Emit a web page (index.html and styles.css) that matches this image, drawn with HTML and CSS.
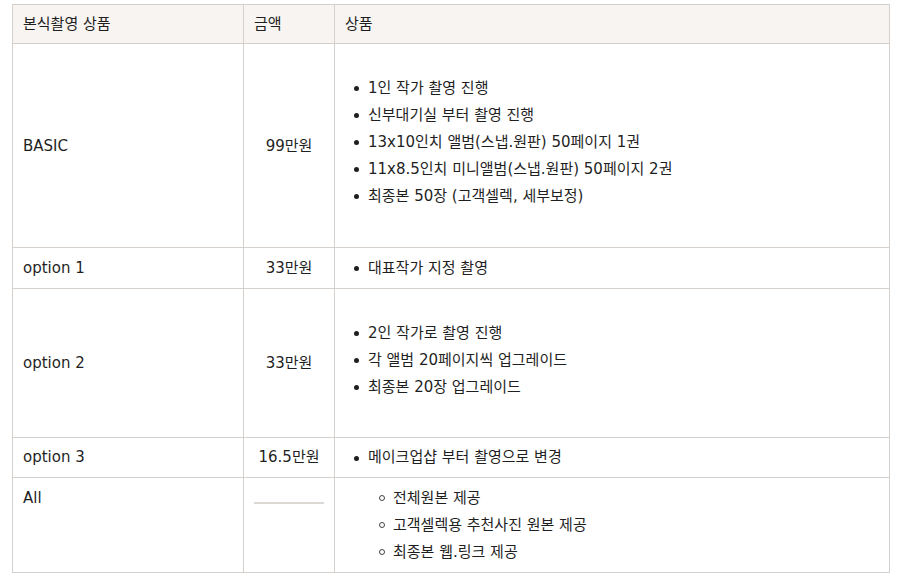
FILE: index.html
```html
<!DOCTYPE html>
<html lang="ko">
<head>
<meta charset="utf-8">
<title>본식촬영 상품</title>
<link rel="stylesheet" href="styles.css">
</head>
<body>
<div class="wrap">
<table class="price">
  <colgroup>
    <col class="c-name">
    <col class="c-amt">
    <col class="c-desc">
  </colgroup>
  <thead>
    <tr>
      <th>본식촬영 상품</th>
      <th>금액</th>
      <th>상품</th>
    </tr>
  </thead>
  <tbody>
    <tr>
      <td>BASIC</td>
      <td class="amt">99만원</td>
      <td>
        <ul class="items multi basic">
          <li>1인 작가 촬영 진행</li>
          <li>신부대기실 부터 촬영 진행</li>
          <li>13x10인치 앨범(스냅.원판) 50페이지 1권</li>
          <li>11x8.5인치 미니앨범(스냅.원판) 50페이지 2권</li>
          <li>최종본 50장 (고객셀렉, 세부보정)</li>
        </ul>
      </td>
    </tr>
    <tr>
      <td>option 1</td>
      <td class="amt">33만원</td>
      <td>
        <ul class="items">
          <li>대표작가 지정 촬영</li>
        </ul>
      </td>
    </tr>
    <tr>
      <td>option 2</td>
      <td class="amt">33만원</td>
      <td>
        <ul class="items multi">
          <li>2인 작가로 촬영 진행</li>
          <li>각 앨범 20페이지씩 업그레이드</li>
          <li>최종본 20장 업그레이드</li>
        </ul>
      </td>
    </tr>
    <tr class="short">
      <td>option 3</td>
      <td class="amt">16.5만원</td>
      <td>
        <ul class="items">
          <li>메이크업샵 부터 촬영으로 변경</li>
        </ul>
      </td>
    </tr>
    <tr class="top">
      <td>All</td>
      <td class="amt"><hr class="rule"></td>
      <td>
        <ul class="items nested">
          <li>전체원본 제공</li>
          <li>고객셀렉용 추천사진 원본 제공</li>
          <li>최종본 웹.링크 제공</li>
        </ul>
      </td>
    </tr>
  </tbody>
</table>
</div>
</body>
</html>
```

FILE: styles.css
```css
html, body {
  margin: 0;
  padding: 0;
  background: #ffffff;
}

body {
  font-family: "DejaVu Sans", "Noto Sans CJK KR", sans-serif;
  font-size: 15px;
  color: #1f1f1f;
}

.wrap {
  padding: 4px 11px 0 12px;
}

.price {
  width: 878px;
  border-collapse: collapse;
  table-layout: fixed;
}

.c-name { width: 231px; }
.c-amt { width: 91px; }
.c-desc { width: auto; }

.price th,
.price td {
  border: 1px solid #d5d0cb;
  padding: 10px 10px;
  line-height: 20px;
  text-align: left;
  vertical-align: middle;
  font-weight: 400;
}

.price th {
  background: #f7f4f1;
  line-height: 18px;
}

.price td.amt {
  text-align: center;
}

.price tr.short td,
.price tr.short li {
  line-height: 19px;
}

.price tr.top td {
  vertical-align: top;
}

.items {
  list-style: none;
  margin: 0;
  padding: 0 0 0 23px;
}

.items li {
  position: relative;
  line-height: 20px;
}

.items li + li {
  margin-top: 7px;
}

.items li::before {
  content: "";
  position: absolute;
  left: -14px;
  top: 8px;
  width: 5px;
  height: 5px;
  border-radius: 50%;
  background: #1f1f1f;
}

.items.multi {
  margin: 24px 0 30px;
}

.items.basic {
  margin-bottom: 31px;
}

.items.nested {
  padding-left: 48px;
}

.items.nested li::before {
  left: -14px;
  top: 7px;
  width: 4px;
  height: 4px;
  background: transparent;
  border: 1px solid #444444;
}

.rule {
  width: 70px;
  height: 0;
  margin: 14px auto 0;
  border: 0;
  border-top: 2px solid #dcd8d3;
}
```
